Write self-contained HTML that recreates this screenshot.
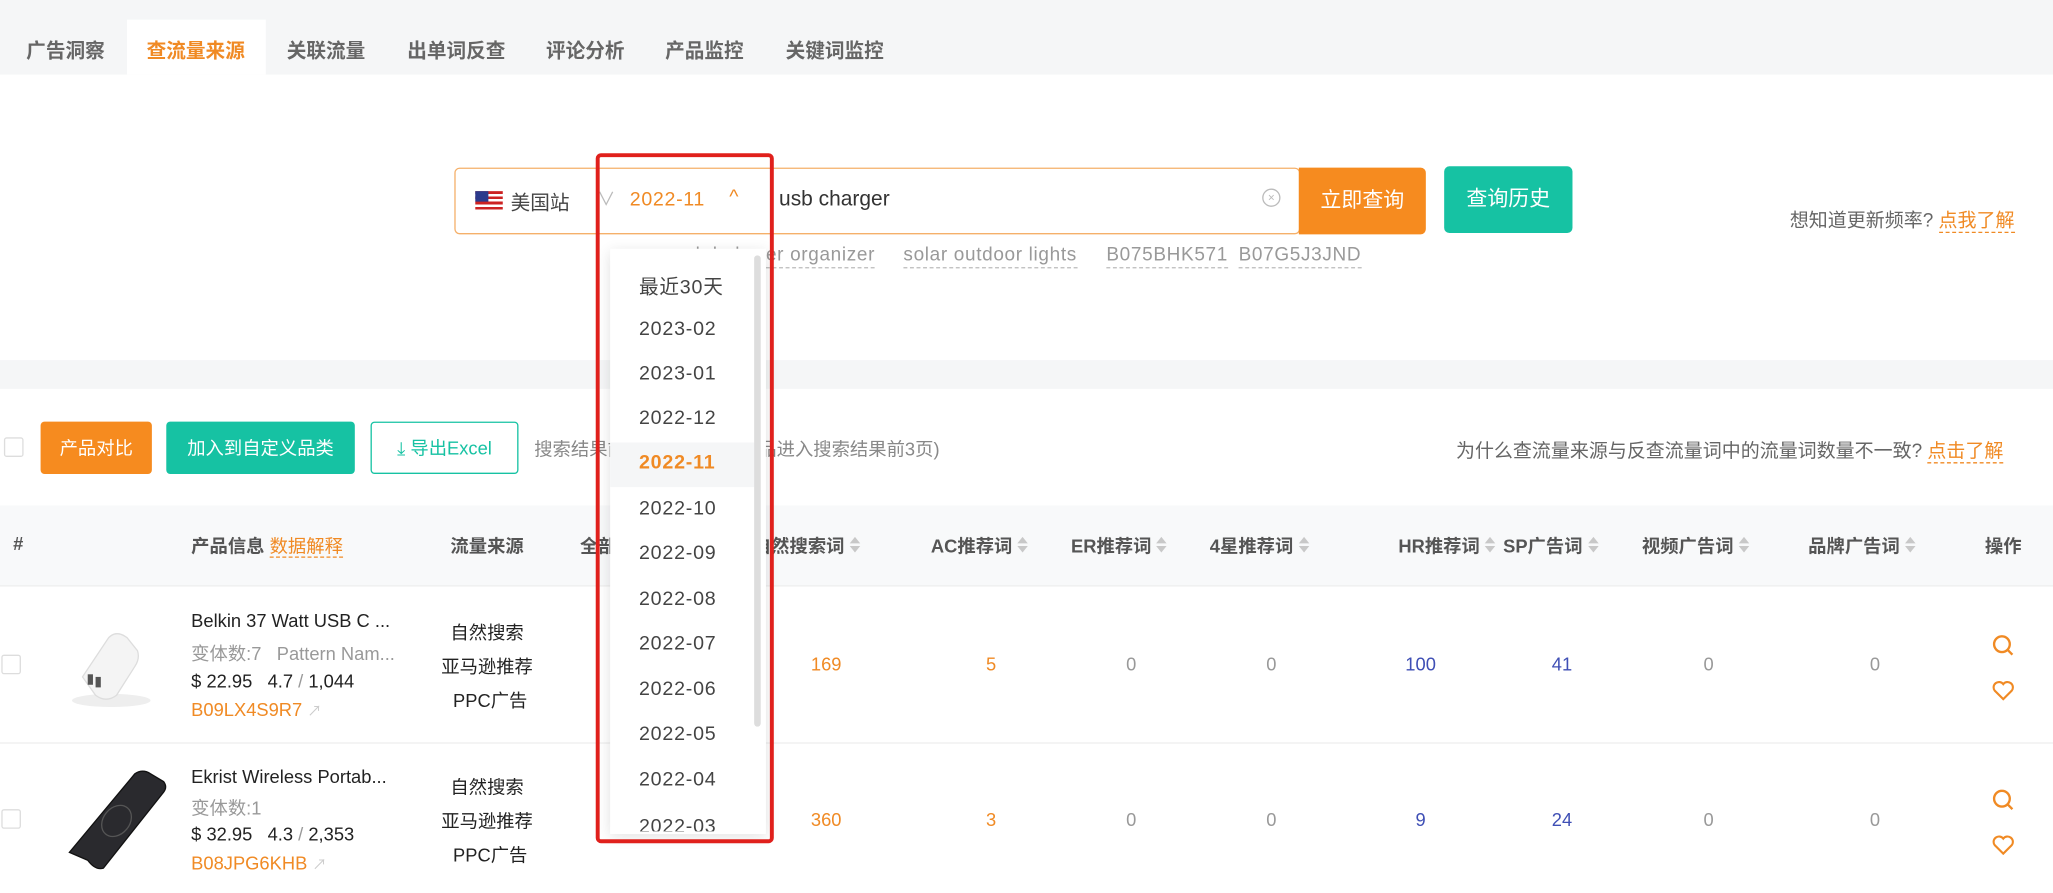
<!DOCTYPE html>
<html><head><meta charset="utf-8"><style>
*{margin:0;padding:0;box-sizing:border-box}
html,body{width:2053px;height:893px;overflow:hidden;background:#fff}
#s{position:absolute;left:0;top:0;width:1568px;height:682px;transform:scale(1.30931);transform-origin:0 0;font-family:"Liberation Sans","Noto Sans CJK SC",sans-serif;color:#333;font-size:14px}
.a{position:absolute;white-space:nowrap}
.tab{position:absolute;top:28px;font-size:15px;font-weight:bold;color:#666}
.h{position:absolute;top:407px;font-size:14px;font-weight:bold;color:#555}
.srt{display:inline-block;width:8px;height:14px;vertical-align:-2px;margin-left:4px;position:relative}
.srt:before{content:"";position:absolute;left:0;top:0;border:4px solid transparent;border-bottom:5px solid #c8c8c8;border-top:0}
.srt:after{content:"";position:absolute;left:0;top:7px;border:4px solid transparent;border-top:5px solid #c8c8c8;border-bottom:0}
.n{position:absolute;font-size:14px;color:#999;transform:translateX(-50%)}
.o{color:#f08a24}.b{color:#3f4fb5}
.dd{position:absolute;left:488px;font-size:15px;color:#444;letter-spacing:.6px}
.sg{position:absolute;top:187px;font-size:14.5px;color:#999;border-bottom:1px dashed #bbb;line-height:17px;letter-spacing:.5px}
.cb{position:absolute;width:15px;height:15px;border:1px solid #ddd;border-radius:2px;background:#fff}
</style></head><body><div id="s">
<div class="a" style="left:0;top:0;width:1568px;height:57px;background:#f5f6f7"></div>
<div class="a" style="left:97px;top:15px;width:106px;height:42px;background:#fff"></div>
<div class="tab" style="left:20px">广告洞察</div>
<div class="tab" style="left:112px;color:#f08a24">查流量来源</div>
<div class="tab" style="left:219px">关联流量</div>
<div class="tab" style="left:311px">出单词反查</div>
<div class="tab" style="left:417px">评论分析</div>
<div class="tab" style="left:508px">产品监控</div>
<div class="tab" style="left:600px">关键词监控</div>

<div class="a" style="left:347px;top:128px;width:646px;height:51px;border:1px solid #f5b06a;border-radius:4px"></div>
<div class="a" style="left:363px;top:146px;width:21px;height:14px;background:repeating-linear-gradient(#c22 0 2px,#fff 2px 4px)"><div style="width:10px;height:8px;background:#2b3a8c"></div></div>
<div class="a" style="left:390px;top:144px;font-size:15px;color:#444">美国站</div>
<div class="a" style="left:456px;top:142px;font-size:14px;color:#bbb">∨</div>
<div class="a" style="left:481px;top:144px;font-size:15px;color:#f08a24;letter-spacing:.5px">2022-11</div>
<div class="a" style="left:557px;top:142px;font-size:15px;color:#f08a24">^</div>
<div class="a" style="left:595px;top:144px;font-size:16px;color:#333">usb charger</div>
<div class="a" style="left:964px;top:144px;width:14px;height:14px;border:1px solid #bbb;border-radius:50%;font-size:9px;color:#bbb;text-align:center;line-height:12px">×</div>
<div class="a" style="left:992px;top:128px;width:97px;height:51px;background:#f68b1f;border-radius:0 4px 4px 0;color:#fff;font-size:16px;text-align:center;line-height:51px">立即查询</div>
<div class="a" style="left:1103px;top:127px;width:98px;height:51px;background:#16c2a3;border-radius:4px;color:#fff;font-size:16px;text-align:center;line-height:51px">查询历史</div>
<div class="a" style="left:1367px;top:157px;font-size:14.5px;color:#666">想知道更新频率? <span style="color:#f08a24;border-bottom:1px dashed #f08a24">点我了解</span></div>
<div class="sg" style="left:515px">usb hub </div>
<div class="sg" style="left:585px">er organizer</div>
<div class="sg" style="left:690px">solar outdoor lights</div>
<div class="sg" style="left:845px">B075BHK571</div>
<div class="sg" style="left:946px">B07G5J3JND</div>

<div class="a" style="left:0;top:275px;width:1568px;height:22px;background:#f5f6f7"></div>

<div class="cb" style="left:3px;top:334px"></div>
<div class="a" style="left:31px;top:322px;width:85px;height:40px;background:#f68b1f;border-radius:3px;color:#fff;text-align:center;line-height:40px;font-size:14px">产品对比</div>
<div class="a" style="left:127px;top:322px;width:144px;height:40px;background:#16c2a3;border-radius:3px;color:#fff;text-align:center;line-height:40px;font-size:14px">加入到自定义品类</div>
<div class="a" style="left:283px;top:322px;width:113px;height:40px;border:1px solid #16c2a3;border-radius:3px;color:#16c2a3;text-align:center;line-height:38px;font-size:14px">⤓ 导出Excel</div>
<div class="a" style="left:408px;top:333px;color:#888">搜索结果前3页共有364个产品进入搜索结果前3页)</div>
<div class="a" style="left:1112px;top:333px;color:#666;font-size:14.5px">为什么查流量来源与反查流量词中的流量词数量不一致? <span style="color:#f08a24;border-bottom:1px dashed #f08a24">点击了解</span></div>

<div class="a" style="left:0;top:386px;width:1568px;height:62px;background:#f8f9fa;border-bottom:1px solid #eee"></div>
<div class="h" style="left:10px">#</div>
<div class="h" style="left:146px">产品信息 <span style="color:#f08a24;font-weight:normal;border-bottom:1px dashed #f08a24">数据解释</span></div>
<div class="h" style="left:344px">流量来源</div>
<div class="h" style="left:443px">全部流量词</div>
<div class="h" style="left:575px">自然搜索词<i class="srt"></i></div>
<div class="h" style="left:711px">AC推荐词<i class="srt"></i></div>
<div class="h" style="left:818px">ER推荐词<i class="srt"></i></div>
<div class="h" style="left:924px">4星推荐词<i class="srt"></i></div>
<div class="h" style="left:1068px">HR推荐词<i class="srt"></i></div>
<div class="h" style="left:1148px">SP广告词<i class="srt"></i></div>
<div class="h" style="left:1254px">视频广告词<i class="srt"></i></div>
<div class="h" style="left:1381px">品牌广告词<i class="srt"></i></div>
<div class="h" style="left:1516px">操作</div>

<div class="a" style="left:0;top:567px;width:1568px;height:1px;background:#eee"></div>

<!-- row 1 -->
<div class="cb" style="left:1px;top:500px"></div>
<svg class="a" style="left:45px;top:465px" width="80" height="80" viewBox="0 0 80 80"><ellipse cx="40" cy="70" rx="30" ry="5" fill="#eee"/><path d="M18 52 L38 22 Q44 16 52 22 L60 32 Q62 38 58 44 L44 66 Q36 72 28 66 Z" fill="#f4f4f4" stroke="#ddd"/><rect x="22" y="50" width="4" height="8" fill="#555"/><rect x="28" y="52" width="4" height="8" fill="#555"/></svg>
<div class="a" style="left:146px;top:466px;font-size:14px;color:#222">Belkin 37 Watt USB C ...</div>
<div class="a" style="left:146px;top:489px;color:#999">变体数:7 &nbsp;&nbsp;Pattern Nam...</div>
<div class="a" style="left:146px;top:512px;color:#222">$ 22.95 &nbsp;&nbsp;4.7 <span style="color:#999">/</span> 1,044</div>
<div class="a" style="left:146px;top:534px;color:#f08a24">B09LX4S9R7 <span style="color:#ccc;font-size:11px">↗</span></div>
<div class="a" style="left:344px;top:473px;color:#222">自然搜索</div>
<div class="a" style="left:337px;top:499px;color:#222">亚马逊推荐</div>
<div class="a" style="left:346px;top:525px;color:#222">PPC广告</div>
<div class="n o" style="left:631px;top:499px">169</div>
<div class="n o" style="left:757px;top:499px">5</div>
<div class="n" style="left:864px;top:499px">0</div>
<div class="n" style="left:971px;top:499px">0</div>
<div class="n b" style="left:1085px;top:499px">100</div>
<div class="n b" style="left:1193px;top:499px">41</div>
<div class="n" style="left:1305px;top:499px">0</div>
<div class="n" style="left:1432px;top:499px">0</div>
<svg class="a" style="left:1521px;top:484px" width="18" height="18" viewBox="0 0 18 18" fill="none" stroke="#f08a24" stroke-width="1.8"><circle cx="8" cy="8" r="6"/><path d="M12.5 12.5L16 16"/></svg>
<svg class="a" style="left:1521px;top:519px" width="18" height="16" viewBox="0 0 18 16" fill="none" stroke="#f08a24" stroke-width="1.6"><path d="M9 15L2.5 8.5A4 4 0 0 1 9 3.5A4 4 0 0 1 15.5 8.5Z"/></svg>

<!-- row 2 -->
<div class="cb" style="left:1px;top:618px"></div>
<svg class="a" style="left:45px;top:585px" width="85" height="82" viewBox="0 0 85 82"><path d="M22 72 L8 66 L58 6 Q64 2 70 6 L80 12 Q83 16 80 20 L34 78 Q28 80 22 72 Z" fill="#2a2a2e" stroke="#111"/><ellipse cx="44" cy="42" rx="13" ry="10" fill="none" stroke="#555" transform="rotate(-50 44 42)"/></svg>
<div class="a" style="left:146px;top:585px;color:#222">Ekrist Wireless Portab...</div>
<div class="a" style="left:146px;top:607px;color:#999">变体数:1</div>
<div class="a" style="left:146px;top:629px;color:#222">$ 32.95 &nbsp;&nbsp;4.3 <span style="color:#999">/</span> 2,353</div>
<div class="a" style="left:146px;top:651px;color:#f08a24">B08JPG6KHB <span style="color:#ccc;font-size:11px">↗</span></div>
<div class="a" style="left:344px;top:591px;color:#222">自然搜索</div>
<div class="a" style="left:337px;top:617px;color:#222">亚马逊推荐</div>
<div class="a" style="left:346px;top:643px;color:#222">PPC广告</div>
<div class="n o" style="left:631px;top:618px">360</div>
<div class="n o" style="left:757px;top:618px">3</div>
<div class="n" style="left:864px;top:618px">0</div>
<div class="n" style="left:971px;top:618px">0</div>
<div class="n b" style="left:1085px;top:618px">9</div>
<div class="n b" style="left:1193px;top:618px">24</div>
<div class="n" style="left:1305px;top:618px">0</div>
<div class="n" style="left:1432px;top:618px">0</div>
<svg class="a" style="left:1521px;top:602px" width="18" height="18" viewBox="0 0 18 18" fill="none" stroke="#f08a24" stroke-width="1.8"><circle cx="8" cy="8" r="6"/><path d="M12.5 12.5L16 16"/></svg>
<svg class="a" style="left:1521px;top:637px" width="18" height="16" viewBox="0 0 18 16" fill="none" stroke="#f08a24" stroke-width="1.6"><path d="M9 15L2.5 8.5A4 4 0 0 1 9 3.5A4 4 0 0 1 15.5 8.5Z"/></svg>

<!-- dropdown -->
<div class="a" style="left:466px;top:190px;width:119px;height:447px;background:#fff;box-shadow:0 2px 10px rgba(0,0,0,.12);overflow:hidden">
<div class="a" style="left:0;top:148px;width:112px;height:34px;background:#f5f6f7"></div>
<div class="a" style="left:110px;top:5px;width:5px;height:360px;background:#ddd;border-radius:3px"></div>
</div>
<div class="dd" style="top:208px">最近30天</div>
<div class="dd" style="top:243px">2023-02</div>
<div class="dd" style="top:277px">2023-01</div>
<div class="dd" style="top:311px">2022-12</div>
<div class="dd" style="top:345px;color:#f08a24;font-weight:bold">2022-11</div>
<div class="dd" style="top:380px">2022-10</div>
<div class="dd" style="top:414px">2022-09</div>
<div class="dd" style="top:449px">2022-08</div>
<div class="dd" style="top:483px">2022-07</div>
<div class="dd" style="top:518px">2022-06</div>
<div class="dd" style="top:552px">2022-05</div>
<div class="dd" style="top:587px">2022-04</div>
<div class="a" style="left:466px;top:620px;width:119px;height:15px;overflow:hidden"><div class="dd" style="left:22px;top:3px">2022-03</div></div>
<div class="a" style="left:455px;top:117px;width:136px;height:527px;border:3px solid #e0201c;border-radius:4px"></div>
</div></body></html>
